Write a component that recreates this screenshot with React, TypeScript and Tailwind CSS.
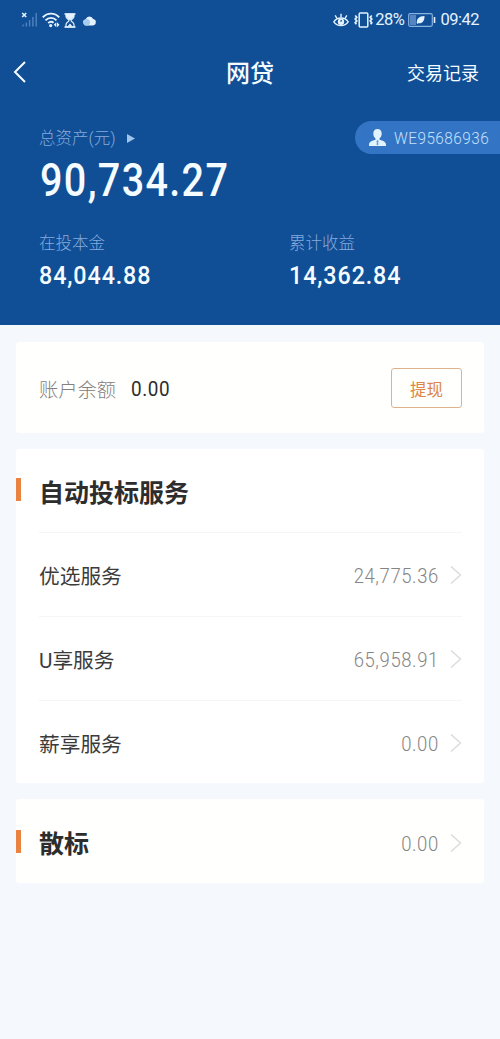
import type { ReactNode } from "react";

const services = [
  { name: "优选服务", amount: "24,775.36" },
  { name: "U享服务", amount: "65,958.91" },
  { name: "薪享服务", amount: "0.00" },
];

function StatusBar() {
  return (
    <div className="flex h-10 items-center justify-between pr-[21px] pl-[21px] text-[#e4f3ff]">
      <div className="flex items-center">
        <svg width="17" height="16" viewBox="0 0 17 16" fill="none">
          <path d="M1.2 1l4 4M5.2 1l-4 4" stroke="currentColor" strokeWidth="1.6" />
          <path d="M2 12.5v2M5.3 10.5v4M8.6 8v6.5M11.9 5v9.500M15.200 1v13.500" stroke="#4c80bf" strokeWidth="1.5" />
        </svg>
        <svg width="18" height="16" viewBox="0 0 18 16" fill="none" className="ml-[4px]">
          <path d="M.8 5.400c4.600-5 11.800-5 16.400 0M3.500 8.300c3.200-3.300 7.800-3.300 11 0M6.200 11c1.800-1.600 3.800-1.600 5.400-.2" stroke="currentColor" strokeWidth="1.900" />
          <circle cx="8.700" cy="13.600" r="1.600" fill="currentColor" />
          <path d="M14.300 10.300v5l-2.500-2.500zM15 10.300v5l2.500-2.500z" fill="currentColor" />
        </svg>
        <svg width="12" height="15" viewBox="0 0 12 15" fill="none" className="ml-[4px]">
          <path d="M.5 1h11M.5 14h11" stroke="currentColor" strokeWidth="1.600" />
          <path d="M2 1h8v2.500c0 2-3 2.700-3 4s3 2 3 4V14H2v-2.500c0-2 3-2.700 3-4s-3-2-3-4z" stroke="currentColor" strokeWidth="1.200" />
          <path d="M2 1h8v2.500L6.500 7h-1L2 3.500zM3.500 13.500L6 10.500l2.500 3z" fill="currentColor" />
        </svg>
        <svg width="15" height="11" viewBox="0 0 14 11" className="ml-[6px]">
          <path d="M3.500 10.500a3.200 3.200 0 0 1-.3-6.300A4 4 0 0 1 10.700 4a3.300 3.300 0 0 1-.2 6.500z" fill="currentColor" />
          <path d="M3.500 10.500a3.200 3.200 0 0 1-.3-6.300c2-.6 4 .6 4.300 2.300.3 1.900-.8 4-2.500 4z" fill="#a9cdee" />
        </svg>
      </div>
      <div className="flex items-center">
        <svg width="16" height="15" viewBox="0 0 16 15" fill="none" stroke="currentColor" strokeWidth="1.400">
          <path d="M.8 8.800c3.500-5 10.900-5 14.400 0-3.500 5-10.900 5-14.400 0z" />
          <circle cx="8" cy="8.700" r="2.500" fill="currentColor" />
          <path d="M8 4.500V.8M4 5.500L2.200 2.300M12 5.500l1.800-3.200" />
          <path d="M7.500 8.400l1.200-1.200" stroke="#104e96" />
        </svg>
        <svg width="19" height="16" viewBox="0 0 19 16" fill="none" stroke="currentColor" className="ml-[5px]">
          <rect x="5.200" y="1" width="8.600" height="14" rx="1" strokeWidth="1.500" />
          <path d="M1.200 3.500l1.600 1.800-1.600 1.800 1.600 1.800-1.600 1.800 1.200 1.600M17.800 3.500l-1.600 1.800 1.600 1.800-1.600 1.800 1.600 1.800-1.200 1.600" strokeWidth="1.700" />
        </svg>
        <span className="ml-[2px] text-[16.500px] leading-5 tracking-[-0.500px]">28%</span>
        <svg width="28" height="14" viewBox="0 0 28 14" fill="none" className="ml-[4px]">
          <rect x=".7" y=".7" width="23.600" height="12.600" rx="1.500" stroke="#87b3e1" strokeWidth="1.200" />
          <path d="M2 2h6v10H2z" fill="#5487c2" />
          <path d="M9 11C8 6 11 3 16.500 3c.3 5-2.500 8-6.300 7.200z" fill="currentColor" />
          <path d="M26.500 4v6" stroke="currentColor" strokeWidth="1.600" />
        </svg>
        <span className="ml-[4px] text-[16.500px] leading-5 tracking-[-0.500px]">09:42</span>
      </div>
    </div>
  );
}

function Amount({ children }: { children: ReactNode }) {
  return (
    <div className="flex items-center text-[#858585]">
      <span className="origin-right scale-x-[0.88] pt-[4px] text-[21px] font-light tracking-[0.700px]">
        {children}
      </span>
      <svg width="12" height="20" viewBox="0 0 12 20" fill="none" className="ml-[11px]">
        <path d="M1 1.500l9.500 8.500L1 18.500" stroke="#d9d9db" strokeWidth="1.300" />
      </svg>
    </div>
  );
}

function SectionTitle({ children }: { children: ReactNode }) {
  return (
    <div className="flex items-center">
      <span className="h-[23px] w-[5px] bg-[#ea8341]" />
      <h2 className="ml-[18px] pt-[8px] text-[25px] leading-9 font-bold text-[#2d2d2d]">{children}</h2>
    </div>
  );
}

function Stat({ label, value }: { label: string; value: string }) {
  return (
    <div className="w-[250px] shrink-0">
      <p className="text-[16.500px] leading-6 font-light text-[#85abdc]">{label}</p>
      <p className="mt-[5px] origin-left scale-x-[0.88] text-[26.500px] leading-7 font-medium tracking-[1px]">
        {value}
      </p>
    </div>
  );
}

export default function App() {
  return (
    <div className="min-h-[1039px] w-[500px] overflow-hidden bg-[#f5f8fd] font-[Roboto,'Noto_Sans_CJK_SC',sans-serif]">
      <header className="h-[325px] bg-[#104e96] text-[#f4fcff]">
        <StatusBar />
        <nav className="grid h-16 grid-cols-3 items-center pr-[21px] pl-[13px]">
          <svg width="14" height="22" viewBox="0 0 14 22" fill="none">
            <path d="M12 1L2 11l10 10" stroke="currentColor" strokeWidth="2" />
          </svg>
          <h1 className="pt-[4px] pl-[8px] text-center text-[24px] leading-9 font-medium">网贷</h1>
          <span className="pt-[3px] text-right text-[18px]">交易记录</span>
        </nav>
        <div className="mt-[17px] flex h-[33px] items-center justify-between pl-[39px]">
          <div className="flex items-center text-[16.500px] font-light text-[#85abdc]">
            <span className="pt-[4px]">总资产(元)</span>
            <svg width="8" height="9" viewBox="0 0 8 9" className="mt-[2px] ml-[11px]">
              <path d="M0 0l8 4.500L0 9z" fill="#9fc4ed" />
            </svg>
          </div>
          <div className="flex h-[33px] w-[145px] items-center rounded-l-full bg-[#3474c4] pl-[14px] text-[#c3e2fb]">
            <svg width="17" height="17" viewBox="0 0 17 17" fill="#e0f3ff">
              <path d="M8.500 0c2.700 0 4.200 1.900 4.200 4.500 0 2.200-.9 4-2.200 5v1.300c2.800.8 6.500 1.600 6.500 5V17H0v-1.200c0-3.400 3.700-4.200 6.500-5V9.500c-1.300-1-2.200-2.800-2.200-5C4.300 1.900 5.800 0 8.500 0z" />
              <path d="M8.500 11l1.300 1.300-.7 1 .4 2.200-1 1-1-1 .4-2.200-.7-1z" fill="#6d9ed5" />
            </svg>
            <span className="ml-[8px] origin-left scale-x-[0.930] pt-[3px] text-[16.500px] font-light tracking-[0.500px]">
              WE95686936
            </span>
          </div>
        </div>
        <p className="mt-[4px] pl-[40px] text-[46px] leading-[44px] font-medium">
          <span className="inline-block origin-left scale-x-[0.860] tracking-[1.550px]">90,734.27</span>
        </p>
        <div className="mt-[30px] flex pl-[39px]">
          <Stat label="在投本金" value="84,044.88" />
          <Stat label="累计收益" value="14,362.84" />
        </div>
      </header>

      <main className="flex flex-col gap-4 px-4 pt-[17px]">
        <section className="flex h-[91px] items-center justify-between rounded-[3px] bg-[#fffffd] pr-[22px] pl-[23px]">
          <div className="flex items-center">
            <span className="pt-[7px] text-[19.300px] font-light text-[#858080]">账户余额</span>
            <span className="ml-[15px] origin-left scale-x-[0.900] pt-[4px] text-[21px] tracking-[0.700px] text-[#2d2d2d]">
              0.00
            </span>
          </div>
          <button className="flex h-10 w-[71px] items-center justify-center rounded-[3px] border border-[#dfb28d] pt-[7px] text-[16.500px] text-[#dc8746]">
            提现
          </button>
        </section>

        <section className="h-[334px] rounded-[3px] bg-white">
          <div className="flex h-[83px] items-center pb-[2px]">
            <SectionTitle>自动投标服务</SectionTitle>
          </div>
          {services.map((item) => (
            <div
              key={item.name}
              className="mr-[22px] ml-[23px] flex h-[84px] items-center justify-between border-t border-[#f5f5f7]"
            >
              <span className="pt-[7px] text-[20.700px] text-[#3b3b3b]">{item.name}</span>
              <Amount>{item.amount}</Amount>
            </div>
          ))}
        </section>

        <section className="flex h-[84px] items-center justify-between rounded-[3px] bg-[#fffffd] pr-[22px]">
          <SectionTitle>散标</SectionTitle>
          <div className="pt-[3px]">
            <Amount>0.00</Amount>
          </div>
        </section>
      </main>
    </div>
  );
}
